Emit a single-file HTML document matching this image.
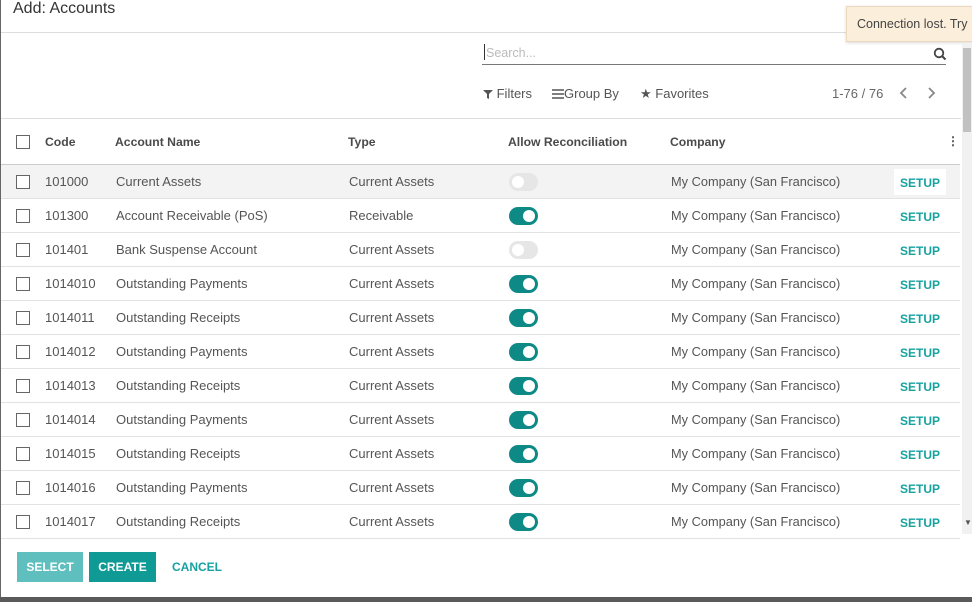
<!DOCTYPE html>
<html><head><meta charset="utf-8"><style>
*{box-sizing:border-box;margin:0;padding:0}
body{width:972px;height:602px;overflow:hidden;background:#fff;font-family:"Liberation Sans",sans-serif;font-size:13px;color:#555;position:relative}
.abs{position:absolute}
.lb{left:0;top:0;width:1px;height:597px;background:#666}
.bottom{left:0;top:597px;width:972px;height:5px;background:#5a5a5a}
.title{left:13px;top:0;font-size:16px;color:#333}
.hline{left:1px;height:1px;background:#ddd}
.toast{left:846px;top:6px;width:140px;height:36px;background:#fbeedb;border:1px solid #ead9bf;box-shadow:0 1px 3px rgba(0,0,0,.15);padding:10px 10px;color:#444;font-size:12.5px;white-space:nowrap}
.sb{left:962px;top:44px;width:10px;height:490px;background:#f1f1f1}
.thumb{left:963px;top:48px;width:8px;height:84px;background:#c1c1c1}
.cb{width:14px;height:14px;border:1.5px solid #666;background:#fff}
.row{left:1px;width:959px;height:34px;border-bottom:1px solid #e2e2e2}
.tog{width:29px;height:18px;border-radius:9px}
.tog i{position:absolute;top:3px;width:12px;height:12px;border-radius:6px;background:#fff}
.on{background:#0e8a86}.on i{right:3px}
.off{background:#e6e6e6}.off i{left:3px;background:#fff}
.setup{color:#17a2a0;font-weight:bold;font-size:12px}
.btn{top:552px;height:30px;color:#fff;font-weight:bold;font-size:12px;line-height:30px;text-align:center}
.hd{font-weight:bold;font-size:12.2px;color:#4a4a4a}
</style></head><body>
<div class="abs lb"></div>
<div class="abs title">Add: Accounts</div>
<div class="abs hline" style="top:32px;width:960px"></div>
<div class="abs toast">Connection lost. Try</div>
<div class="abs" style="left:484px;top:44px;width:1px;height:16px;background:#333"></div>
<div class="abs" style="left:486px;top:46px;color:#bbb;font-size:12.5px">Search...</div>
<div class="abs" style="left:482px;top:64px;width:464px;height:1px;background:#777"></div>
<svg class="abs" style="left:933px;top:47px" width="14" height="14" viewBox="0 0 14 14"><circle cx="6" cy="6" r="4.3" fill="none" stroke="#444" stroke-width="1.8"/><line x1="9" y1="9" x2="12.5" y2="12.5" stroke="#444" stroke-width="2"/></svg>
<div class="abs" style="left:483px;top:86px">
<svg width="10" height="10" viewBox="0 0 10 10" style="vertical-align:-1px"><path d="M0 1h10L6 5v5L4 9V5z" fill="#555"/></svg> Filters</div>
<div class="abs" style="left:552px;top:86px">
<svg width="12" height="10" viewBox="0 0 12 10" style="vertical-align:-1px"><path d="M0 1h12M0 5h12M0 9h12" stroke="#555" stroke-width="1.4"/></svg>Group By</div>
<div class="abs" style="left:640px;top:86px"><span style="color:#555">★</span> Favorites</div>
<div class="abs" style="left:832px;top:86px;color:#666">1-76 / 76</div>
<svg class="abs" style="left:899px;top:87px" width="10" height="12" viewBox="0 0 10 12"><path d="M7 1L2 6l5 5" fill="none" stroke="#888" stroke-width="1.8"/></svg>
<svg class="abs" style="left:926px;top:87px" width="10" height="12" viewBox="0 0 10 12"><path d="M3 1l5 5-5 5" fill="none" stroke="#888" stroke-width="1.8"/></svg>
<div class="abs hline" style="top:118px;width:960px"></div>
<div class="abs cb" style="left:16px;top:135px"></div>
<div class="abs hd" style="left:45px;top:135px">Code</div>
<div class="abs hd" style="left:115px;top:135px">Account Name</div>
<div class="abs hd" style="left:348px;top:135px">Type</div>
<div class="abs hd" style="left:508px;top:135px">Allow Reconciliation</div>
<div class="abs hd" style="left:670px;top:135px">Company</div>
<div class="abs hd" style="left:947px;top:134px">⋮</div>
<div class="abs" style="left:1px;top:164px;width:959px;height:1px;background:#ccc;box-shadow:0 1px 2px rgba(0,0,0,.1)"></div>
<div id="rows"></div>
<div class="abs btn" style="left:17px;width:66px;background:#5fbfbe">SELECT</div>
<div class="abs btn" style="left:89px;width:67px;background:#0f9a96">CREATE</div>
<div class="abs btn" style="left:172px;color:#17a2a0;background:none">CANCEL</div>
<div class="abs sb"></div>
<div class="abs thumb"></div>
<div class="abs" style="left:964px;top:518px;font-size:8px;color:#555">▼</div>
<div class="abs bottom"></div>
<script>
var d=[["101000","Current Assets","Current Assets",0],["101300","Account Receivable (PoS)","Receivable",1],["101401","Bank Suspense Account","Current Assets",0],["1014010","Outstanding Payments","Current Assets",1],["1014011","Outstanding Receipts","Current Assets",1],["1014012","Outstanding Payments","Current Assets",1],["1014013","Outstanding Receipts","Current Assets",1],["1014014","Outstanding Payments","Current Assets",1],["1014015","Outstanding Receipts","Current Assets",1],["1014016","Outstanding Payments","Current Assets",1],["1014017","Outstanding Receipts","Current Assets",1]];
var h="";
d.forEach(function(r,i){var t=165+i*34;
h+='<div class="abs row" style="top:'+t+'px;'+(i==0?'background:#f3f3f3':'')+'"></div>';
h+='<div class="abs cb" style="left:16px;top:'+(t+10)+'px"></div>';
h+='<div class="abs" style="left:45px;top:'+(t+9)+'px">'+r[0]+'</div>';
h+='<div class="abs" style="left:116px;top:'+(t+9)+'px">'+r[1]+'</div>';
h+='<div class="abs" style="left:349px;top:'+(t+9)+'px">'+r[2]+'</div>';
h+='<div class="abs tog '+(r[3]?'on':'off')+'" style="left:509px;top:'+(t+8)+'px"><i></i></div>';
h+='<div class="abs" style="left:671px;top:'+(t+9)+'px;font-size:12.8px">My Company (San Francisco)</div>';
h+='<div class="abs setup" style="left:894px;top:'+(t+4)+'px;width:52px;height:26px;line-height:28px;text-align:center;'+(i==0?'background:#fff':'')+'">SETUP</div>';
});
document.getElementById("rows").innerHTML=h;
</script>
</body></html>
